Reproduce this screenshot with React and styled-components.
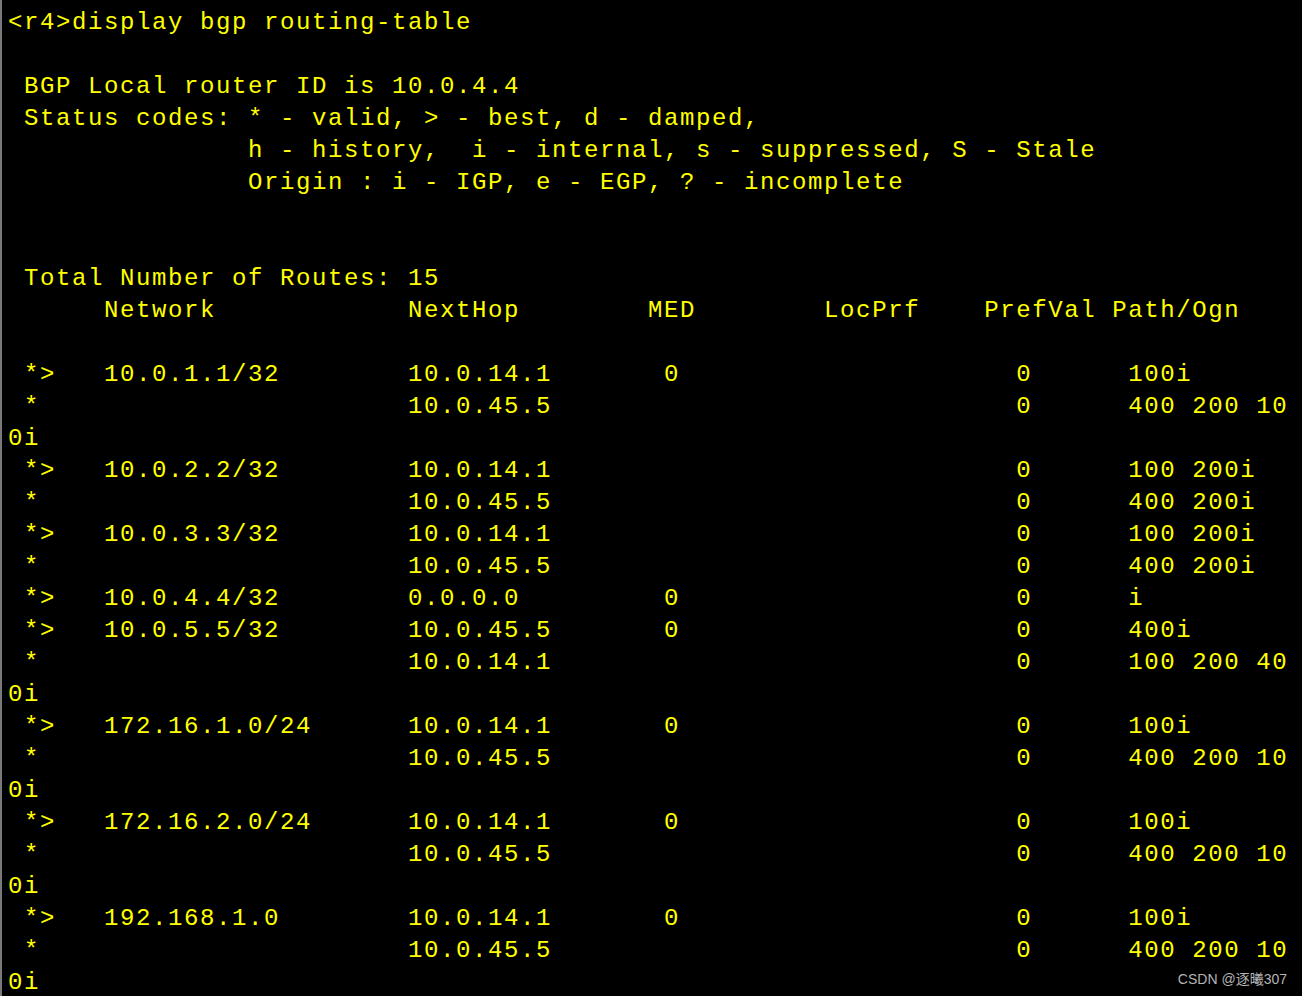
import styled, { createGlobalStyle } from "styled-components";

const GlobalStyle = createGlobalStyle`
  html, body {
    margin: 0;
    padding: 0;
    background: #000;
  }
`;

const COLS = 80;

// put each piece of text at its terminal column
const cols = (parts) => {
  let s = "";
  parts.forEach(([c, t]) => {
    s = s.padEnd(c) + t;
  });
  return s;
};

// the terminal wraps long lines at 80 columns
const wrap = (s) => {
  const out = [];
  for (let i = 0; i < s.length; i += COLS) out.push(s.slice(i, i + COLS));
  return out.length ? out : [""];
};

const route = (st, net, hop, med, pref, path) =>
  cols([
    [1, st],
    [6, net],
    [25, hop],
    [41, med],
    [63, pref],
    [70, path],
  ]).replace(/\s+$/, "");

const routes = [
  ["*>", "10.0.1.1/32", "10.0.14.1", "0", "0", "100i"],
  ["*", "", "10.0.45.5", "", "0", "400 200 100i"],
  ["*>", "10.0.2.2/32", "10.0.14.1", "", "0", "100 200i"],
  ["*", "", "10.0.45.5", "", "0", "400 200i"],
  ["*>", "10.0.3.3/32", "10.0.14.1", "", "0", "100 200i"],
  ["*", "", "10.0.45.5", "", "0", "400 200i"],
  ["*>", "10.0.4.4/32", "0.0.0.0", "0", "0", "i"],
  ["*>", "10.0.5.5/32", "10.0.45.5", "0", "0", "400i"],
  ["*", "", "10.0.14.1", "", "0", "100 200 400i"],
  ["*>", "172.16.1.0/24", "10.0.14.1", "0", "0", "100i"],
  ["*", "", "10.0.45.5", "", "0", "400 200 100i"],
  ["*>", "172.16.2.0/24", "10.0.14.1", "0", "0", "100i"],
  ["*", "", "10.0.45.5", "", "0", "400 200 100i"],
  ["*>", "192.168.1.0", "10.0.14.1", "0", "0", "100i"],
  ["*", "", "10.0.45.5", "", "0", "400 200 100i"],
];

const lines = [
  "<r4>display bgp routing-table",
  "",
  " BGP Local router ID is 10.0.4.4",
  " Status codes: * - valid, > - best, d - damped,",
  "               h - history,  i - internal, s - suppressed, S - Stale",
  "               Origin : i - IGP, e - EGP, ? - incomplete",
  "",
  "",
  " Total Number of Routes: 15",
  cols([
    [6, "Network"],
    [25, "NextHop"],
    [40, "MED"],
    [51, "LocPrf"],
    [61, "PrefVal"],
    [69, "Path/Ogn"],
  ]),
  "",
  ...routes.flatMap((r) => wrap(route(...r))),
];

const Screen = styled.div`
  position: relative;
  box-sizing: border-box;
  width: 1302px;
  height: 996px;
  overflow: hidden;
  background: #000;
  border-left: 2px solid #7a7a7a;
  padding: 7px 0 0 6px;
`;

const Output = styled.pre`
  margin: 0;
  font-family: "Liberation Mono", "Courier New", monospace;
  font-size: 24px;
  letter-spacing: 1.6px;
  line-height: 32px;
  color: #ffff00;
  white-space: pre;
`;

const Line = styled.div`
  height: 32px;
`;

const Watermark = styled.div`
  position: absolute;
  right: 15px;
  bottom: 8px;
  font-family: "Liberation Sans", "Noto Sans CJK SC", sans-serif;
  font-size: 14px;
  color: #b4b4b4;
`;

const App = () => {
  return (
    <Screen>
      <GlobalStyle />
      <Output>
        {lines.map((l, i) => (
          <Line key={i}>{l}</Line>
        ))}
      </Output>
      <Watermark>CSDN @逐曦307</Watermark>
    </Screen>
  );
};

export default App;
